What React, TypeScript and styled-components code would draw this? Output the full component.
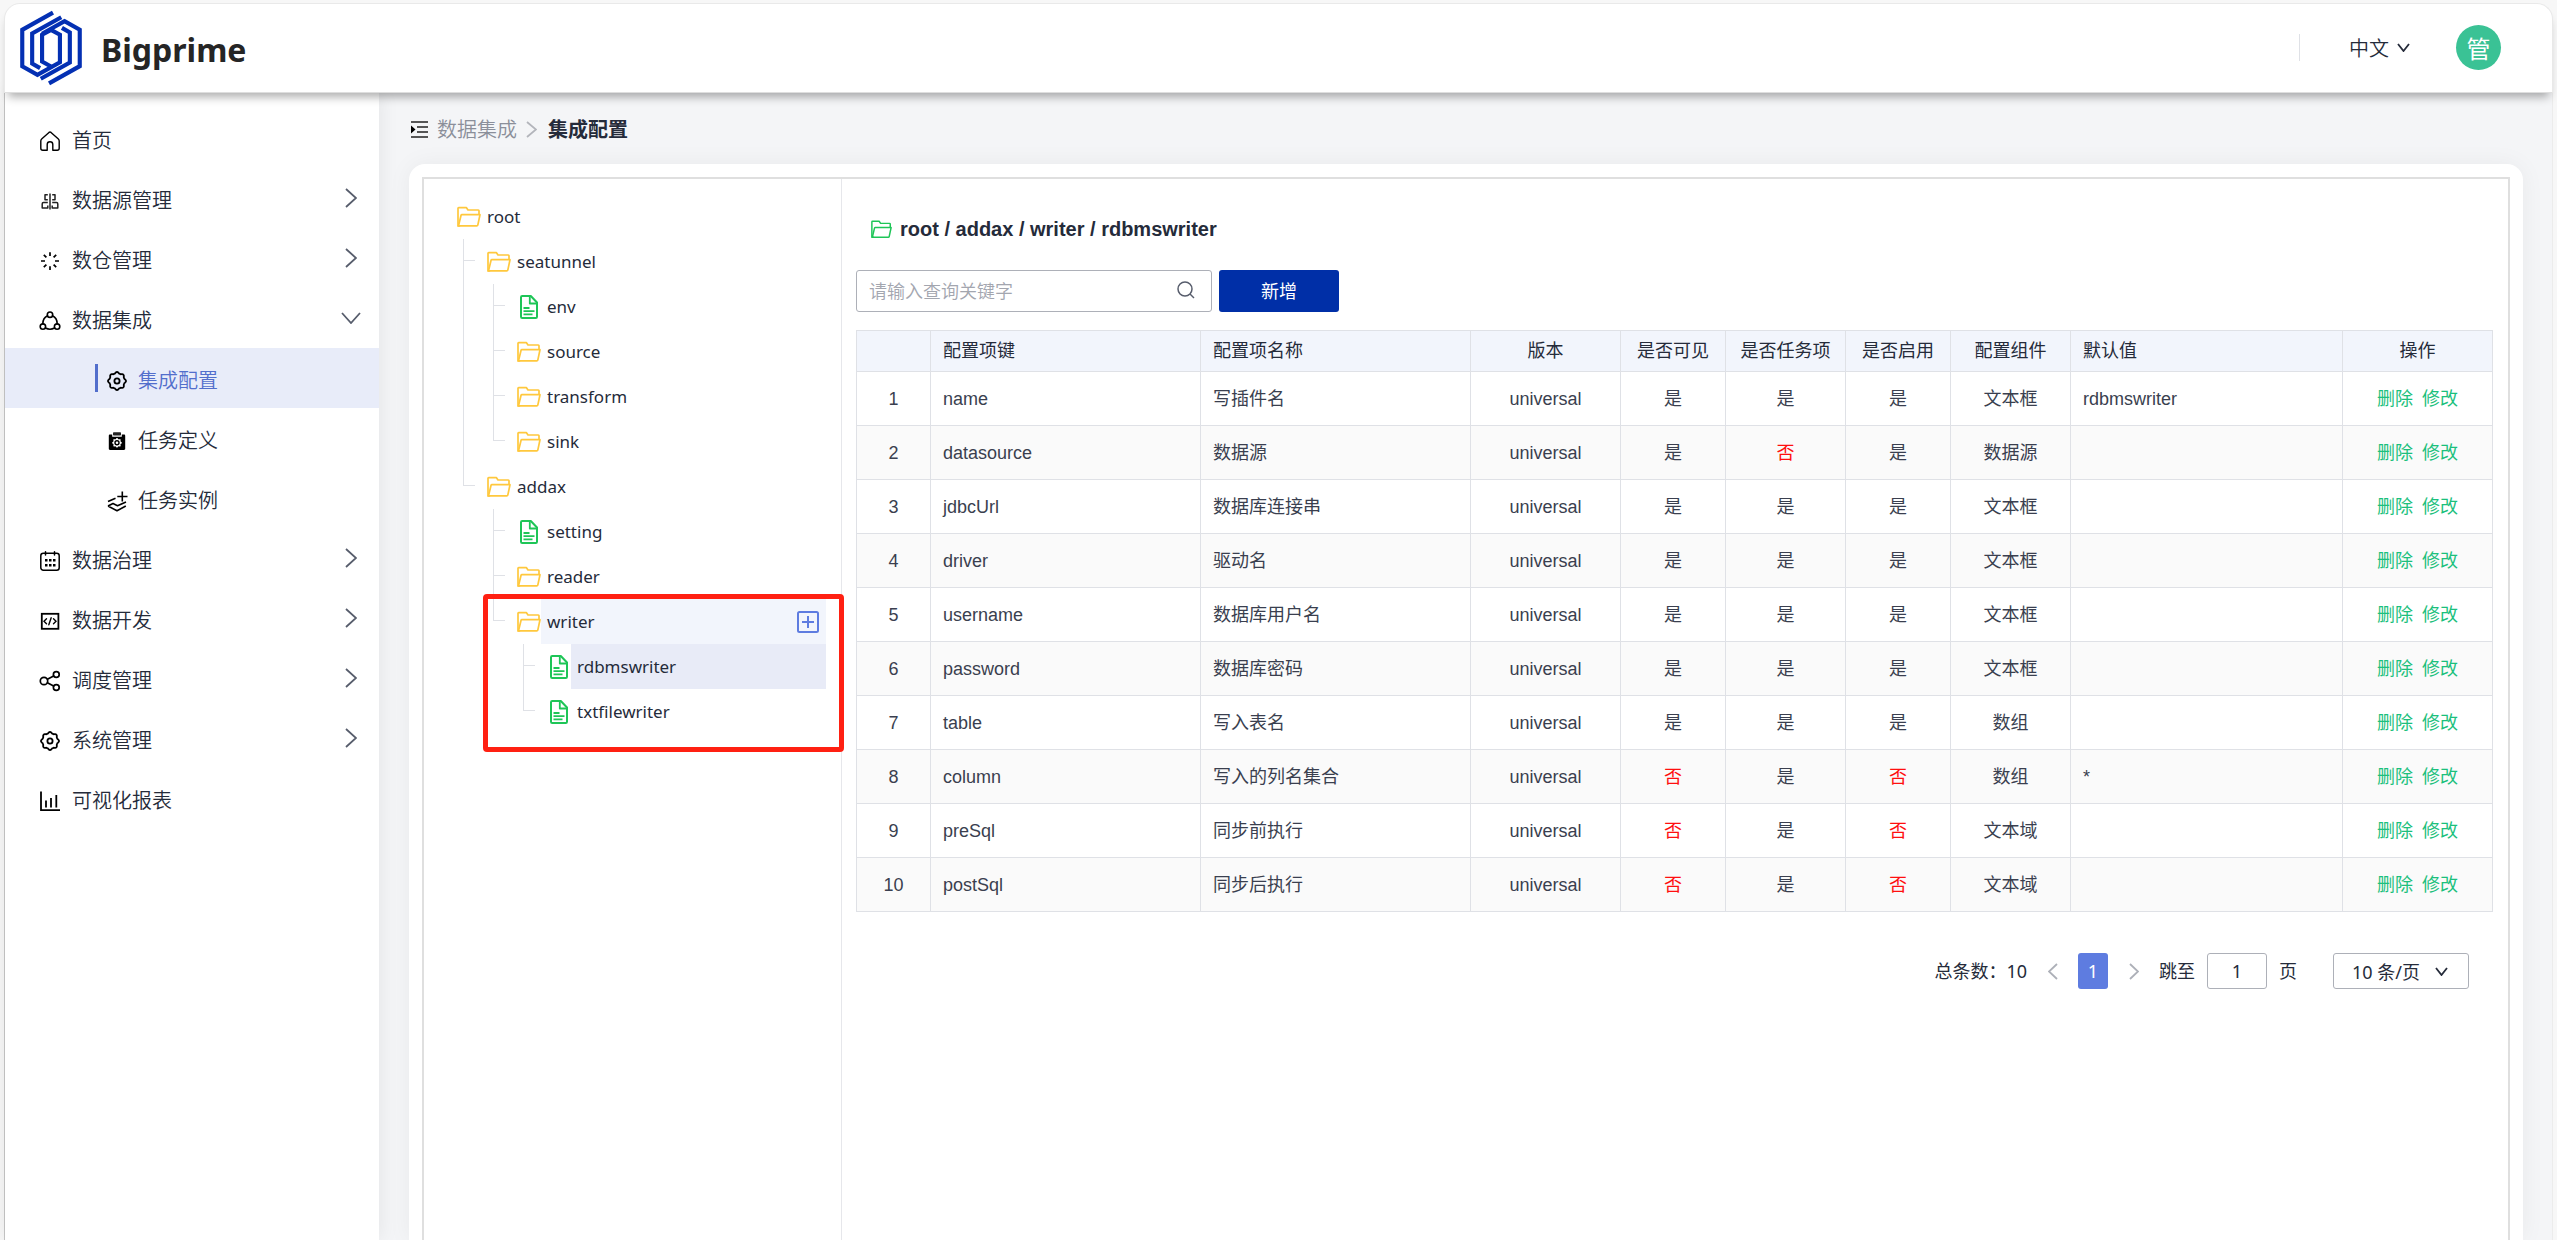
import React from "react";
import styled, { createGlobalStyle, css } from "styled-components";

const uiFont = `"Noto Sans", "Noto Sans CJK SC", sans-serif`;
const cjkFont = `"Noto Sans CJK SC", sans-serif`;
const tableFont = `"Liberation Sans", "Noto Sans CJK SC", sans-serif`;

const color = {
  ink: "#252b3a",
  muted: "#8b8f9a",
  line: "#dfe1e6",
  control: "#adb0b8",
  accent: "#5e7ce0",
  primary: "#002fa7",
  success: "#1bc07c",
  danger: "#ff0f0f",
  folder: "#ffc83d",
  file: "#1ec557",
};

const GlobalStyle = createGlobalStyle`
  *, *::before, *::after { box-sizing: border-box; }
  body {
    margin: 0;
    background: #f7f7f7;
    color: ${color.ink};
    font-family: ${uiFont};
    font-size: 18px;
  }
  button, input, select { font: inherit; color: inherit; margin: 0; }
  button { padding: 0; border: 0; background: none; cursor: pointer; }
  a { color: inherit; text-decoration: none; }
  ul { list-style: none; margin: 0; padding: 0; }
  svg { display: block; flex: none; }
`;

/* ---------- shell ---------- */

const Shell = styled.div`
  display: flex;
  flex-direction: column;
  height: 100vh;
  padding: 3px 4px 0;
  overflow: hidden;
`;

const Header = styled.header`
  position: relative;
  z-index: 2;
  flex: none;
  display: flex;
  align-items: center;
  height: 90px;
  padding: 0 51px 1px 13px;
  background: #fff;
  border: 1px solid #e9e9e9;
  border-radius: 16px 16px 0 0;
  border-bottom-color: #dedede;
  box-shadow: 0 8px 10px -4px rgba(0, 0, 0, 0.32);
`;

const Brand = styled.a`
  display: flex;
  align-items: center;
  gap: 17px;
  color: #252525;
  font: 700 32px/48px ${uiFont};
`;

const BrandName = styled.span`
  padding-top: 4px;
`;

const HeaderTools = styled.div`
  display: flex;
  align-items: center;
  margin-left: auto;
`;

const HeaderDivider = styled.span`
  width: 1px;
  height: 27px;
  margin-right: 49px;
  background: ${color.line};
`;

const Picker = styled.label`
  position: relative;
  display: flex;
  align-items: center;

  svg {
    position: absolute;
    right: 0;
    pointer-events: none;
  }
`;

const LanguageSelect = styled.select`
  appearance: none;
  width: 61px;
  padding: 0;
  border: 0;
  background: transparent;
  font: 350 20px/28px ${cjkFont};
`;

const Avatar = styled.button`
  width: 45px;
  height: 45px;
  margin-left: 46px;
  border-radius: 50%;
  background: #3ac295;
  color: #fff;
  font: 24px/44px ${cjkFont};
`;

const Body = styled.div`
  flex: 1;
  display: flex;
  min-height: 0;
  border-left: 1px solid #c6c6c6;
  border-right: 1px solid #ececec;
`;

/* ---------- sidebar ---------- */

const Sidebar = styled.nav`
  position: relative;
  z-index: 1;
  flex: none;
  width: 374px;
  padding-top: 15px;
  background: #fff;
  box-shadow: 0 0 20px rgba(0, 0, 0, 0.08);
`;

const itemStyle = css`
  display: flex;
  align-items: center;
  width: 100%;
  height: 60px;
  font: 350 20px/28px ${cjkFont};
  text-align: left;
  padding: 4px 18px 0 34px;
  gap: 11px;
`;

const MenuLink = styled.a`
  ${itemStyle}
`;

const MenuToggle = styled.button`
  ${itemStyle}
`;

const SubLink = styled.a<{ $active?: boolean }>`
  ${itemStyle}
  padding-left: 90px;
  gap: 0;
  background: ${(p) => (p.$active ? "#e8ecf9" : "transparent")};
  color: ${(p) => (p.$active ? "#526ecc" : "inherit")};

  &::before {
    content: "";
    width: 3px;
    height: 28px;
    margin: 0 8px 4px 0;
    background: ${(p) => (p.$active ? "#526ecc" : "transparent")};
  }

  svg { color: #000; margin-right: 10px; }
`;

const MenuIcon = styled.svg.attrs({ width: 22, height: 22, viewBox: "0 0 22 22", fill: "none", "aria-hidden": true })`
  margin-top: 2px;
  color: #000;
  stroke: currentColor;
  stroke-width: 1.6;
  stroke-linecap: round;
  stroke-linejoin: round;
`;

const MenuLabel = styled.span`
  flex: 1;
`;

const MenuArrow = styled.span`
  display: flex;
  justify-content: center;
  width: 20px;
  padding-bottom: 5px;
`;

/* ---------- main ---------- */

const Main = styled.main`
  flex: 1;
  min-width: 0;
  display: flex;
  flex-direction: column;
  padding: 21px 29px 0 30px;
  background: #f4f5f7;
`;

const Breadcrumb = styled.nav`
  display: flex;
  align-items: center;
  height: 30px;
  margin-bottom: 20px;
  padding-left: 2px;
  font: 20px/30px ${cjkFont};

  a { color: ${color.muted}; margin: 0 9px; font-weight: 350; }
  strong { margin-left: 11px; }
`;

const Card = styled.section`
  flex: 1;
  display: flex;
  min-height: 0;
  padding: 13px 13px 0;
  background: #fff;
  border-radius: 16px 16px 0 0;
  box-shadow: 0 0 24px rgba(0, 0, 0, 0.05);
`;

const Split = styled.div`
  flex: 1;
  display: flex;
  min-width: 0;
  border: 2px solid #dfdfdf;
  border-bottom: 0;
`;

/* ---------- tree ---------- */

const TreePane = styled.aside`
  flex: none;
  width: 418px;
  padding: 15px 15px 0 33px;
  border-right: 1px solid #e6e7eb;
`;

const Row = styled.div`
  display: flex;
  align-items: center;
  height: 45px;
`;

const Guide = styled.span<{ $line: boolean }>`
  flex: none;
  align-self: stretch;
  width: 24px;
  margin-left: 6px;
  border-left: 1px solid ${(p) => (p.$line ? color.line : "transparent")};
`;

const Elbow = styled.span`
  display: block;
  width: 12px;
  height: 22px;
  margin-left: -1px;
  border: solid ${color.line};
  border-width: 0 0 1px 1px;
`;

const NodeLabel = styled.a<{ $tone?: "hover" | "selected" }>`
  flex: 1;
  display: flex;
  align-items: center;
  justify-content: space-between;
  height: 45px;
  padding: 0 7px 0 6px;
  line-height: 45px;
  font-size: 17px;
  background: ${(p) => (p.$tone === "selected" ? "#e8ebf7" : p.$tone === "hover" ? "#f2f5fc" : "transparent")};
`;

const NodeIcon = styled.svg.attrs({ viewBox: "0 0 24 24", fill: "none", "aria-hidden": true })`
  stroke-linejoin: round;
`;

const Highlight = styled.div`
  position: relative;

  &::after {
    content: "";
    position: absolute;
    inset: -5px -18px -18px 26px;
    border: 5px solid #ff2012;
    border-radius: 4px;
    pointer-events: none;
  }
`;

/* ---------- detail ---------- */

const Detail = styled.div`
  flex: 1;
  min-width: 0;
  padding: 34px 15px 0 14px;
  font-family: ${tableFont};
`;

const PathTitle = styled.h1`
  display: flex;
  align-items: center;
  gap: 8px;
  height: 32px;
  margin: 0 0 25px;
  padding-left: 15px;
  font: 700 20px/32px ${tableFont};
`;

const Toolbar = styled.div`
  display: flex;
  gap: 7px;
  margin-bottom: 18px;
`;

const SearchBox = styled.label`
  display: flex;
  align-items: center;
  width: 356px;
  height: 42px;
  padding: 0 16px 2px 12px;
  border: 1px solid ${color.control};
  border-radius: 3px;

  input {
    flex: 1;
    min-width: 0;
    padding: 0;
    border: 0;
    outline: 0;
    background: none;
    font: 350 18px/26px ${cjkFont};
  }
  input::placeholder { color: #a3a6af; opacity: 1; }
`;

const PrimaryButton = styled.button`
  width: 120px;
  height: 42px;
  padding-bottom: 2px;
  border-radius: 3px;
  background: ${color.primary};
  color: #fff;
  font: 18px/40px ${cjkFont};
`;

const Table = styled.table`
  width: 100%;
  table-layout: fixed;
  border-collapse: collapse;
  font: 18px/26px ${tableFont};
`;

const cellStyle = css<{ $center?: boolean }>`
  padding: 0 12px;
  border: 1px solid ${color.line};
  text-align: ${(p) => (p.$center ? "center" : "left")};
  white-space: nowrap;
`;

const Th = styled.th<{ $center?: boolean }>`
  ${cellStyle}
  height: 41px;
  background: #f2f5fc;
  font-weight: 400;
`;

const Td = styled.td<{ $center?: boolean; $no?: boolean }>`
  ${cellStyle}
  height: 54px;
  color: ${(p) => (p.$no ? color.danger : "#3a3f4f")};

  tr:nth-child(even) > & { background: #fafafa; }
`;

const Action = styled.button`
  color: ${color.success};
  & + & { margin-left: 9px; }
`;

const Pagination = styled.nav`
  display: flex;
  align-items: center;
  justify-content: flex-end;
  height: 36px;
  margin: 41px 24px 0 0;
  font: 18px/36px ${uiFont};
`;

const Arrow = styled.button`
  display: flex;
  align-items: center;
  justify-content: center;
  width: 51px;
  height: 36px;
  color: ${color.control};
`;

const PageButton = styled.button`
  width: 30px;
  height: 36px;
  border-radius: 3px;
  background: ${color.accent};
  color: #fff;
`;

const JumpLabel = styled.label`
  display: flex;
  align-items: center;
  gap: 12px;
  margin-right: 36px;
`;

const JumpInput = styled.input`
  width: 60px;
  height: 36px;
  padding: 0;
  border: 1px solid ${color.control};
  border-radius: 3px;
  background: #fff;
  text-align: center;
`;

const SizePicker = styled(Picker)`
  svg { right: 21px; }
`;

const SizeSelect = styled.select`
  appearance: none;
  width: 136px;
  height: 36px;
  padding: 0 18px 2px;
  border: 1px solid ${color.control};
  border-radius: 3px;
  background: #fff;
`;

/* ---------- drawings ---------- */

const gearPath = (c: number, r: number, depth: number, lobes = 8) => {
  const steps = 96;
  let d = "";
  for (let i = 0; i < steps; i++) {
    const a = (i / steps) * Math.PI * 2 - Math.PI / 2;
    const wave = Math.max(-0.7, Math.cos(lobes * (a + Math.PI / 2)));
    const rr = r + depth * wave;
    d += `${i ? "L" : "M"}${(c + rr * Math.cos(a)).toFixed(2)} ${(c + rr * Math.sin(a)).toFixed(2)}`;
  }
  return d + "Z";
};

const Logo = () => (
  <svg width="66" height="76" viewBox="12 10 198 230" fill="none" stroke="#0430b3" strokeWidth="12.5" aria-hidden="true">
    <path d="M117 18 24 70V180L70 206 138 168V85L111 70 84 85V166L111 181" />
    <path d="M105 232 198 180V70L152 44 84 82" />
    <path d="M142 32 54 81V172L78 186" />
    <path d="M80 218 168 169V78L144 64" />
  </svg>
);

type ChevronProps = { dir: "left" | "right" | "down"; w?: number; h?: number; tint?: string };

const Chevron = ({ dir, w = 12, h = 20, tint = "#575d6c" }: ChevronProps) => {
  const d = {
    right: `M1 1L${w - 1} ${h / 2}L1 ${h - 1}`,
    left: `M${w - 1} 1L1 ${h / 2}L${w - 1} ${h - 1}`,
    down: `M1 1L${w / 2} ${h - 1}L${w - 1} 1`,
  }[dir];
  return (
    <svg width={w} height={h} viewBox={`0 0 ${w} ${h}`} fill="none" stroke={tint} strokeWidth="1.8" aria-hidden="true">
      <path d={d} />
    </svg>
  );
};

const icons: Record<string, React.ReactNode> = {
  home: (
    <path
      d="M8.2 20.2H3.8C2.5 20.2 1.8 19.4 1.8 18.2V11C1.8 10 2.2 9.3 2.9 8.7L10 2.4C10.6 1.9 11.4 1.9 12 2.4L19.1 8.7C19.8 9.3 20.2 10 20.2 11V18.2C20.2 19.4 19.5 20.2 18.2 20.2H13.8V14.5C13.8 12.8 12.7 11.8 11 11.8C9.3 11.8 8.2 12.8 8.2 14.5Z"
      strokeWidth="1.4"
    />
  ),
  source: (
    <path
      d="M11 3.5V19.5M8.8 4.7H6V9.7H8.8M13.2 4.7H16V9.7H13.2M8.8 12.5H4.5C3.5 12.5 3.2 13 3.2 14V18H8.8V15.5M13.2 12.5H17.5C18.5 12.5 18.8 13 18.8 14V18H13.2V15.5"
      strokeWidth="1.5"
      strokeLinecap="butt"
      stroke="#222"
    />
  ),
  loading: (
    <path
      d="M11 2.2V6M11 16.2V20M2 11H6M16 11H20M4.8 4.8 7.4 7.4M14.6 14.6 17.2 17.2M17.2 4.8 14.6 7.4M7.4 14.6 4.8 17.2"
      strokeWidth="1.7"
      strokeLinecap="butt"
    />
  ),
  integrate: (
    <g>
      <circle cx="11" cy="4.7" r="2.7" />
      <circle cx="3.9" cy="16.6" r="2.7" />
      <circle cx="18.1" cy="16.6" r="2.7" />
      <path d="M8.5 5.8C5.5 7.2 3.9 10 3.8 13.7M13.5 5.8C16.5 7.2 18.1 10 18.2 13.7M6.5 18C9.5 19.7 12.5 19.7 15.5 18" />
    </g>
  ),
  gear: (
    <g strokeWidth="1.8">
      <path d={gearPath(11, 8.2, 0.8)} />
      <circle cx="11" cy="11" r="2.6" />
    </g>
  ),
  clipboard: (
    <g stroke="none">
      <path fill="#000" d="M4 4.5H6.2V6.8H15.8V4.5H18C18.7 4.5 19.2 5 19.2 5.7V18.8C19.2 19.5 18.7 20 18 20H4C3.3 20 2.8 19.5 2.8 18.8V5.7C2.8 5 3.3 4.5 4 4.5Z" />
      <rect fill="#222" x="7" y="2.2" width="8" height="3.4" rx="0.8" />
      <path fill="#fff" d={gearPath(11, 4.3, 0.6)} transform="translate(0 1.8)" />
      <circle cx="11" cy="12.8" r="2" fill="none" stroke="#000" strokeWidth="1.4" />
    </g>
  ),
  layers: (
    <path
      d="M16.3 1.5V11.5M11.3 6.5H21.5M9.5 8.3 2 11.6M2 16 7 13.5 11.5 15.8 20 12M2 16 11 20.8 19.8 16"
      strokeLinecap="butt"
    />
  ),
  calendar: (
    <g strokeWidth="1.5">
      <rect x="1.8" y="3.2" width="18.4" height="17" rx="2.5" />
      <path d="M6.5 1.8V5M15.5 1.8V5" />
      <path d="M6 10.2H16.5M6 15.2H16.5" strokeWidth="2.6" strokeLinecap="butt" strokeDasharray="2.5 1.5" />
    </g>
  ),
  code: (
    <g strokeLinejoin="miter">
      <rect x="2.8" y="3.8" width="16.6" height="15" strokeWidth="1.8" />
      <path d="M7.5 8.8 5 11.3 7.5 13.8M14.5 8.8 17 11.3 14.5 13.8M12.2 7.8 9.8 14.8" strokeWidth="1.4" />
    </g>
  ),
  share: (
    <g strokeWidth="1.7">
      <circle cx="5" cy="11" r="3.7" />
      <circle cx="17.3" cy="4.5" r="2.9" />
      <circle cx="17.3" cy="17.5" r="2.9" />
      <path d="M8.4 9.2 14.6 6M8.4 12.8 14.6 16" />
    </g>
  ),
  chart: (
    <path
      d="M2 1.5V20.2H21M7 10.5V17.5M12 8V17.5M17.3 5V17.5"
      strokeWidth="1.8"
      strokeLinecap="butt"
      strokeLinejoin="miter"
    />
  ),
};

const Icon = ({ name }: { name: string }) => <MenuIcon>{icons[name]}</MenuIcon>;

const FolderIcon = ({ tint = color.folder, size = 24 }: { tint?: string; size?: number }) => (
  <NodeIcon width={size} height={size} stroke={tint} strokeWidth="1.7">
    <path d="M3.2 20.9H1V3.3Q1 2.6 1.7 2.6H9.3L11 5H21.3Q22 5 22 5.7V9.5" />
    <path d="M1.5 20.9 4 10.5Q4.2 9.7 5 9.7H23L20.8 20.1Q20.6 20.9 19.8 20.9Z" />
  </NodeIcon>
);

const FileIcon = () => (
  <NodeIcon width={24} height={24} stroke={color.file} strokeWidth="2">
    <path d="M4 2.2Q4 1 5.2 1H13.8L20 7.5V21.8Q20 23 18.8 23H5.2Q4 23 4 21.8Z" />
    <path d="M12.8 1.5V8.5H19.5M6.5 13H12.5M6.5 16.2H17.5M6.5 19.4H15.5" strokeWidth="1.8" />
  </NodeIcon>
);

const PlusBox = () => (
  <svg width="22" height="22" viewBox="0 0 22 22" fill="none" stroke={color.accent} strokeWidth="2" aria-hidden="true">
    <rect x="1" y="1" width="20" height="20" rx="1.5" />
    <path d="M11 5V17M5 11H17" />
  </svg>
);

const IndentIcon = () => (
  <svg width="17" height="17" viewBox="0 0 17 17" aria-hidden="true">
    <path d="M0 1H17M6 6H17M6 11H17M0 16H17" stroke="#222" strokeWidth="1.6" />
    <path d="M0 4.5 4.5 8.5 0 12.5Z" fill="#000" />
  </svg>
);

const SearchIcon = () => (
  <svg width="18" height="18" viewBox="0 0 18 18" fill="none" stroke="#575d6c" strokeWidth="1.5" aria-hidden="true">
    <circle cx="8" cy="8" r="7" />
    <path d="M13 13 17 17" />
  </svg>
);

/* ---------- data ---------- */

type MenuEntry = {
  icon: string;
  label: string;
  group?: boolean;
  children?: { icon: string; label: string; active?: boolean }[];
};

const menu: MenuEntry[] = [
  { icon: "home", label: "首页" },
  { icon: "source", label: "数据源管理", group: true },
  { icon: "loading", label: "数仓管理", group: true },
  {
    icon: "integrate",
    label: "数据集成",
    group: true,
    children: [
      { icon: "gear", label: "集成配置", active: true },
      { icon: "clipboard", label: "任务定义" },
      { icon: "layers", label: "任务实例" },
    ],
  },
  { icon: "calendar", label: "数据治理", group: true },
  { icon: "code", label: "数据开发", group: true },
  { icon: "share", label: "调度管理", group: true },
  { icon: "gear", label: "系统管理", group: true },
  { icon: "chart", label: "可视化报表" },
];

type TreeItem = { name: string; children?: TreeItem[]; tone?: "hover" | "selected"; marked?: boolean };

const tree: TreeItem = {
  name: "root",
  children: [
    {
      name: "seatunnel",
      children: [
        { name: "env" },
        { name: "source", children: [] },
        { name: "transform", children: [] },
        { name: "sink", children: [] },
      ],
    },
    {
      name: "addax",
      children: [
        { name: "setting" },
        { name: "reader", children: [] },
        {
          name: "writer",
          tone: "hover",
          marked: true,
          children: [{ name: "rdbmswriter", tone: "selected" }, { name: "txtfilewriter" }],
        },
      ],
    },
  ],
};

const columns: { title: string; width?: number; center?: boolean }[] = [
  { title: "", width: 74, center: true },
  { title: "配置项键", width: 270 },
  { title: "配置项名称", width: 270 },
  { title: "版本", width: 150, center: true },
  { title: "是否可见", width: 105, center: true },
  { title: "是否任务项", width: 120, center: true },
  { title: "是否启用", width: 105, center: true },
  { title: "配置组件", width: 120, center: true },
  { title: "默认值" },
  { title: "操作", width: 150, center: true },
];

const rows: [string, string, boolean, boolean, boolean, string, string][] = [
  ["name", "写插件名", true, true, true, "文本框", "rdbmswriter"],
  ["datasource", "数据源", true, false, true, "数据源", ""],
  ["jdbcUrl", "数据库连接串", true, true, true, "文本框", ""],
  ["driver", "驱动名", true, true, true, "文本框", ""],
  ["username", "数据库用户名", true, true, true, "文本框", ""],
  ["password", "数据库密码", true, true, true, "文本框", ""],
  ["table", "写入表名", true, true, true, "数组", ""],
  ["column", "写入的列名集合", false, true, false, "数组", "*"],
  ["preSql", "同步前执行", false, true, false, "文本域", ""],
  ["postSql", "同步后执行", false, true, false, "文本域", ""],
];

/* ---------- parts ---------- */

/* `guides` holds, for each ancestor level, whether its vertical line continues past this node. */
const TreeNode = ({ item, guides, last }: { item: TreeItem; guides: boolean[]; last: boolean }) => {
  const isRoot = item === tree;
  const next = isRoot ? [] : [...guides, !last];
  const content = (
    <>
      <Row>
        {guides.map((on, i) => (
          <Guide key={i} $line={on} />
        ))}
        {!isRoot && (
          <Guide $line={!last}>
            <Elbow />
          </Guide>
        )}
        {item.children ? <FolderIcon /> : <FileIcon />}
        <NodeLabel href="#" $tone={item.tone}>
          {item.name}
          {item.tone === "hover" && <PlusBox />}
        </NodeLabel>
      </Row>
      {item.children?.map((child, i, all) => (
        <TreeNode key={child.name} item={child} guides={next} last={i === all.length - 1} />
      ))}
    </>
  );
  return item.marked ? <Highlight>{content}</Highlight> : content;
};

const Flag = ({ value }: { value: boolean }) => (
  <Td $center $no={!value}>
    {value ? "是" : "否"}
  </Td>
);

export default function App() {
  return (
    <>
      <GlobalStyle />
      <Shell>
        <Header>
          <Brand href="#">
            <Logo />
            <BrandName>Bigprime</BrandName>
          </Brand>
          <HeaderTools>
            <HeaderDivider />
            <Picker>
              <LanguageSelect aria-label="语言">
                <option>中文</option>
              </LanguageSelect>
              <Chevron dir="down" w={13} h={9} tint="#252b3a" />
            </Picker>
            <Avatar>管</Avatar>
          </HeaderTools>
        </Header>
        <Body>
          <Sidebar>
            <ul>
              {menu.map((m) => (
                <li key={m.label}>
                  {m.group ? (
                    <MenuToggle aria-expanded={!!m.children}>
                      <Icon name={m.icon} />
                      <MenuLabel>{m.label}</MenuLabel>
                      <MenuArrow>
                        {m.children ? <Chevron dir="down" w={20} h={12} /> : <Chevron dir="right" />}
                      </MenuArrow>
                    </MenuToggle>
                  ) : (
                    <MenuLink href="#">
                      <Icon name={m.icon} />
                      <MenuLabel>{m.label}</MenuLabel>
                    </MenuLink>
                  )}
                  {m.children && (
                    <ul>
                      {m.children.map((c) => (
                        <li key={c.label}>
                          <SubLink href="#" $active={c.active}>
                            <Icon name={c.icon} />
                            <MenuLabel>{c.label}</MenuLabel>
                          </SubLink>
                        </li>
                      ))}
                    </ul>
                  )}
                </li>
              ))}
            </ul>
          </Sidebar>
          <Main>
            <Breadcrumb>
              <IndentIcon />
              <a href="#">数据集成</a>
              <Chevron dir="right" w={11} h={17} tint="#b3b5bb" />
              <strong>集成配置</strong>
            </Breadcrumb>
            <Card>
              <Split>
                <TreePane>
                  <TreeNode item={tree} guides={[]} last />
                </TreePane>
                <Detail>
                  <PathTitle>
                    <FolderIcon tint={color.file} size={21} />
                    root / addax / writer / rdbmswriter
                  </PathTitle>
                  <Toolbar>
                    <SearchBox>
                      <input type="text" placeholder="请输入查询关键字" aria-label="查询关键字" />
                      <SearchIcon />
                    </SearchBox>
                    <PrimaryButton>新增</PrimaryButton>
                  </Toolbar>
                  <Table>
                    <colgroup>
                      {columns.map((c, i) => (
                        <col key={i} width={c.width} />
                      ))}
                    </colgroup>
                    <thead>
                      <tr>
                        {columns.map((c, i) => (
                          <Th key={i} $center={c.center}>
                            {c.title}
                          </Th>
                        ))}
                      </tr>
                    </thead>
                    <tbody>
                      {rows.map(([key, name, visible, task, enabled, widget, value], i) => (
                        <tr key={key}>
                          <Td $center>{i + 1}</Td>
                          <Td>{key}</Td>
                          <Td>{name}</Td>
                          <Td $center>universal</Td>
                          <Flag value={visible} />
                          <Flag value={task} />
                          <Flag value={enabled} />
                          <Td $center>{widget}</Td>
                          <Td>{value}</Td>
                          <Td $center>
                            <Action>删除</Action>
                            <Action>修改</Action>
                          </Td>
                        </tr>
                      ))}
                    </tbody>
                  </Table>
                  <Pagination aria-label="分页">
                    <span>总条数：10</span>
                    <Arrow aria-label="上一页">
                      <Chevron dir="left" w={10} h={17} tint={color.control} />
                    </Arrow>
                    <PageButton aria-current="page">1</PageButton>
                    <Arrow aria-label="下一页">
                      <Chevron dir="right" w={10} h={17} tint={color.control} />
                    </Arrow>
                    <JumpLabel>
                      跳至
                      <JumpInput type="text" defaultValue="1" />
                      页
                    </JumpLabel>
                    <SizePicker>
                      <SizeSelect aria-label="每页条数">
                        <option>10 条/页</option>
                      </SizeSelect>
                      <Chevron dir="down" w={13} h={9} tint="#252b3a" />
                    </SizePicker>
                  </Pagination>
                </Detail>
              </Split>
            </Card>
          </Main>
        </Body>
      </Shell>
    </>
  );
}
